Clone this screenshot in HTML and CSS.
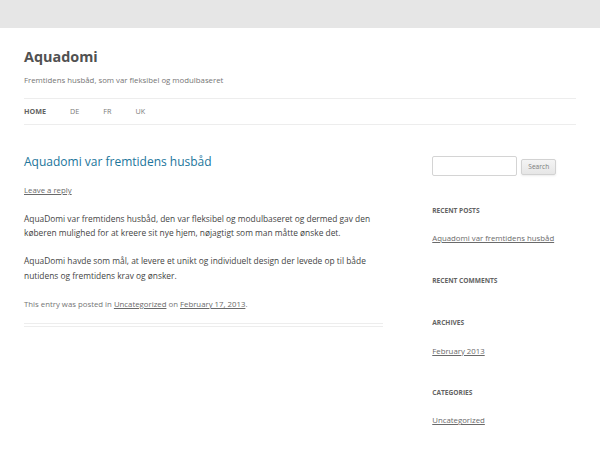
FILE: index.html
```html
<!DOCTYPE html>
<html lang="da">

<head>
  <meta charset="UTF-8">
  <meta name="viewport" content="width=device-width, initial-scale=1.0">
  <title>Aquadomi</title>
  <link rel="stylesheet" href="styles.css">
</head>

<body>
  <div class="site">
    <header class="site-header">
      <h1 class="site-title"><a href="#">Aquadomi</a></h1>
      <h2 class="site-description">Fremtidens husbåd, som var fleksibel og modulbaseret</h2>
      <nav class="main-navigation">
        <ul class="nav-menu">
          <li class="current-menu-item"><a href="#">Home</a></li>
          <li><a href="#">DE</a></li>
          <li><a href="#">FR</a></li>
          <li><a href="#">UK</a></li>
        </ul>
      </nav>
    </header>

    <div class="wrapper">
      <main class="site-content">
        <article class="post">
          <header class="entry-header">
            <h1 class="entry-title"><a href="#">Aquadomi var fremtidens husbåd</a></h1>
            <div class="comments-link"><a href="#">Leave a reply</a></div>
          </header>
          <div class="entry-content">
            <p>AquaDomi var fremtidens husbåd, den var fleksibel og modulbaseret og dermed gav den køberen mulighed for at kreere sit nye hjem, nøjagtigt som man måtte ønske det.</p>
            <p>AquaDomi havde som mål, at levere et unikt og individuelt design der levede op til både nutidens og fremtidens krav og ønsker.</p>
          </div>
          <footer class="entry-meta">
            This entry was posted in <a href="#">Uncategorized</a> on <a href="#">February 17, 2013</a>.
          </footer>
        </article>
      </main>

      <aside class="widget-area">
        <div class="widget widget-search">
          <form class="search-form">
            <input type="text" class="search-field">
            <button type="button" class="search-submit">Search</button>
          </form>
        </div>
        <div class="widget">
          <h3 class="widget-title">Recent Posts</h3>
          <ul>
            <li><a href="#">Aquadomi var fremtidens husbåd</a></li>
          </ul>
        </div>
        <div class="widget">
          <h3 class="widget-title">Recent Comments</h3>
          <ul></ul>
        </div>
        <div class="widget">
          <h3 class="widget-title">Archives</h3>
          <ul>
            <li><a href="#">February 2013</a></li>
          </ul>
        </div>
        <div class="widget">
          <h3 class="widget-title">Categories</h3>
          <ul>
            <li><a href="#">Uncategorized</a></li>
          </ul>
        </div>
      </aside>
    </div>
  </div>
</body>

</html>
```

FILE: styles.css
```css
body {
  margin: 0;
  background-color: #e6e6e6;
  font-family: "Open Sans", Helvetica, Arial, sans-serif;
  font-size: 8.4px;
  line-height: 14.4px;
  color: #444;
}

h1,
h2,
h3,
p,
ul {
  margin: 0;
  padding: 0;
}

ul {
  list-style: none;
}

.site {
  background-color: #fff;
  margin-top: 28px;
  padding: 0 24px;
  min-height: 422px;
  overflow: hidden;
}

/* Header */
.site-header {
  padding-top: 19.5px;
}

.site-title {
  font-size: 14.4px;
  line-height: 18.5px;
  font-weight: bold;
  margin-bottom: 7px;
}

.site-title a {
  color: #515151;
  text-decoration: none;
}

.site-description {
  font-size: 7.8px;
  line-height: 14.4px;
  font-weight: normal;
  color: #757575;
}

.main-navigation {
  margin-top: 10.5px;
}

.nav-menu {
  display: flex;
  border-top: 1px solid #ededed;
  border-bottom: 1px solid #ededed;
}

.nav-menu li {
  margin-right: 24px;
  font-size: 7.2px;
  line-height: 25px;
}

.nav-menu a {
  color: #7a7a7a;
  text-decoration: none;
  text-transform: uppercase;
}

.nav-menu .current-menu-item a {
  color: #636363;
  font-weight: bold;
}

/* Layout */
.wrapper {
  display: flex;
  justify-content: space-between;
  align-items: flex-start;
  margin-top: 30px;
}

.site-content {
  width: 65.104%;
}

.widget-area {
  width: 26.042%;
  margin-top: 1px;
}

/* Post */
.post {
  padding-bottom: 11.5px;
  border-bottom: 4px double #ededed;
  margin-bottom: 43px;
}

.entry-header {
  margin-bottom: 14px;
}

.entry-title {
  font-size: 12px;
  line-height: 14.4px;
  font-weight: normal;
}

.entry-title a {
  color: #21759b;
  text-decoration: none;
}

.comments-link {
  margin-top: 13.8px;
  font-size: 7.8px;
  line-height: 14.4px;
}

.comments-link a,
.entry-meta a {
  color: #6a6a6a;
}

.entry-content p {
  margin-bottom: 13.8px;
}

.entry-meta {
  font-size: 7.8px;
  line-height: 14.4px;
  color: #757575;
}

/* Sidebar */
.widget {
  margin-bottom: 28px;
}

.search-form {
  display: flex;
  align-items: center;
  height: 20px;
}

.search-field {
  box-sizing: border-box;
  width: 85px;
  height: 20px;
  margin: 0;
  padding: 0 4px;
  border: 1px solid #d4d4d4;
  border-radius: 2px;
  background: #fff;
  font-family: inherit;
}

.search-submit {
  box-sizing: border-box;
  width: 35px;
  height: 16px;
  margin: 2px 0 0 4px;
  padding: 0;
  border: 1px solid #d2d2d2;
  border-radius: 2px;
  background: linear-gradient(to bottom, #f4f4f4, #e6e6e6);
  box-shadow: 0 1px 2px rgba(64, 64, 64, 0.1);
  font-family: inherit;
  font-size: 6.6px;
  line-height: 14px;
  color: #7c7c7c;
}

.widget-title {
  font-size: 6.6px;
  line-height: 14.4px;
  font-weight: bold;
  text-transform: uppercase;
  color: #636363;
  margin-bottom: 13px;
}

.widget li {
  font-size: 7.8px;
  line-height: 14.4px;
}

.widget li a {
  color: #6a6a6a;
}
```
